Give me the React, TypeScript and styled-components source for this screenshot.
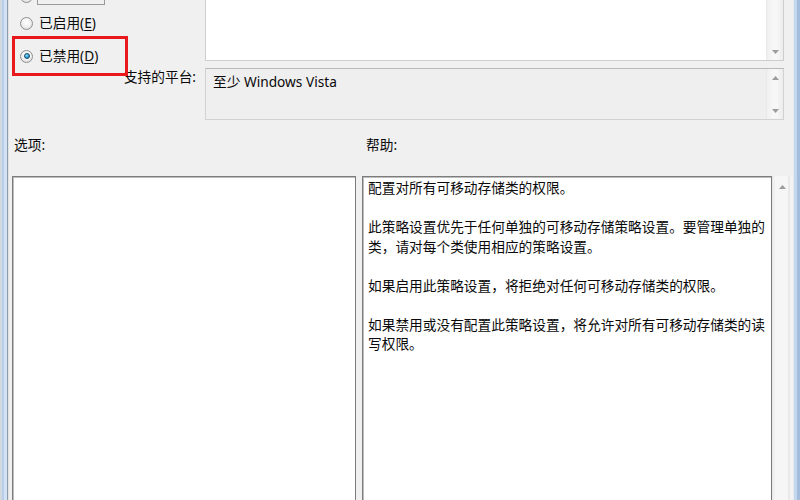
import styled, { createGlobalStyle } from "styled-components";

const GlobalStyle = createGlobalStyle`
  html, body {
    margin: 0;
    padding: 0;
  }
  body {
    width: 800px;
    height: 500px;
    overflow: hidden;
    background: #f0f0f0;
    font-family: "Noto Sans", "Noto Sans CJK SC", sans-serif;
    font-size: 13.7px;
    color: #0a0a0a;
  }
`;

const Window = styled.div`
  position: relative;
  display: flex;
  width: 800px;
  height: 500px;
  overflow: hidden;
  background: #f0f0f0;
`;

const FrameEdge = styled.div<{ $side: "left" | "right" }>`
  flex: none;
  width: ${(p) => (p.$side === "left" ? 9 : 7)}px;
  background: ${(p) =>
    p.$side === "left"
      ? "linear-gradient(to right, #d3d8de 0 2px, #b7cfec 2px 4px, #d2e2f4 4px 7px, #8f9cab 7px 8px, #dfe2e5 8px 9px)"
      : "linear-gradient(to right, #e8ebee 0 1px, #c3d7ee 1px 4px, #a3bddc 4px 7px)"};
`;

const Content = styled.div`
  flex: 1;
  display: flex;
  flex-direction: column;
  margin-top: -20px;
  min-width: 0;
`;

const TopSection = styled.div`
  display: grid;
  grid-template-columns: 196px 579px;
`;

const ChoiceColumn = styled.div`
  display: flex;
  flex-direction: column;
  padding: 3px 9px 0 11px;
`;

const RadioRow = styled.div<{ $after?: number; $bottom?: boolean }>`
  display: flex;
  align-items: ${(p) => (p.$bottom ? "flex-end" : "center")};
  gap: 4px;
  height: ${(p) => (p.$bottom ? 22 : 20)}px;
  margin-bottom: ${(p) => p.$after ?? 0}px;
  line-height: 18px;
`;

const RadioDot = styled.span<{ $checked?: boolean; $lift?: number }>`
  position: relative;
  flex: none;
  width: 13px;
  height: 13px;
  margin-bottom: ${(p) => p.$lift ?? 0}px;
  box-sizing: border-box;
  border-radius: 50%;
  border: 1px solid #8f8f8f;
  background: radial-gradient(circle at 50% 40%, #ffffff 0%, #f2f2f2 45%, #d4d4d4 100%);

  &::after {
    content: "";
    display: ${(p) => (p.$checked ? "block" : "none")};
    position: absolute;
    left: 2.5px;
    top: 2.5px;
    width: 6px;
    height: 6px;
    box-sizing: border-box;
    border-radius: 50%;
    border: 1px solid #1b4f6e;
    background: radial-gradient(circle at 40% 35%, #9be3fb 0%, #2ba6d9 50%, #0f5a82 100%);
  }
`;

/* focus rectangle of the first (scrolled-off) choice: only its lower edge shows */
const FocusFrame = styled.span`
  width: 68px;
  height: 22px;
  box-sizing: border-box;
  border: 1px solid #9a9a9a;
`;

const ChoiceLabel = styled.span`
  padding: 0 1px;
  border: 1px solid transparent;
  white-space: nowrap;

  u {
    text-decoration: underline;
    text-underline-offset: 2px;
  }
`;

const PlatformLabel = styled.div`
  margin-top: 3px;
  text-align: right;
  line-height: 16px;
  white-space: nowrap;
`;

const FieldColumn = styled.div`
  display: flex;
  flex-direction: column;
  gap: 7px;
`;

const TextBox = styled.div<{ $height: number; $readOnly?: boolean }>`
  display: flex;
  height: ${(p) => p.$height}px;
  box-sizing: border-box;
  border: 1px solid ${(p) => (p.$readOnly ? "#d2d2d2" : "#cdcdcd")};
  border-top-color: ${(p) => (p.$readOnly ? "#b8b8b8" : "#cdcdcd")};
  background: ${(p) => (p.$readOnly ? "#efefef" : "#ffffff")};
`;

const BoxText = styled.div`
  flex: 1;
  padding: 5px 7px 0;
  line-height: 16px;
`;

const ScrollBar = styled.div<{ $align: "start" | "end" | "both" }>`
  flex: none;
  width: 16px;
  display: flex;
  flex-direction: column;
  justify-content: ${(p) =>
    p.$align === "both" ? "space-between" : p.$align === "end" ? "flex-end" : "flex-start"};
  border-left: 1px solid #e9e9e9;
  background: linear-gradient(to right, #f0f0f0, #f7f7f7 40%, #f7f7f7 60%, #ececec);
`;

const ScrollButton = styled.div`
  height: 17px;
  display: flex;
  align-items: center;
  justify-content: center;
`;

const BottomSection = styled.div`
  flex: 1;
  display: grid;
  grid-template-columns: 350px 410px 21px;
  grid-template-rows: 16px 1fr;
  row-gap: 23px;
  margin-top: 17px;
  padding-left: 3px;
`;

const SectionLabel = styled.div<{ $indent: number }>`
  padding-left: ${(p) => p.$indent}px;
  line-height: 16px;
`;

const SunkenBox = styled.div<{ $gapRight?: number }>`
  height: 420px;
  box-sizing: border-box;
  margin-right: ${(p) => p.$gapRight ?? 0}px;
  border: 1px solid #7c7c7c;
  box-shadow: inset 1px 1px 0 #bdbdbd;
  background: #ffffff;
`;

const HelpBox = styled(SunkenBox)`
  padding: 1px 4px 0 5px;
  line-height: 19.5px;
`;

const HelpParagraph = styled.p`
  margin: 0 0 19.5px;
`;

const HelpScroll = styled.div`
  display: flex;
  flex-direction: column;
  padding-top: 2px;
  background: linear-gradient(to right, #e6e6e6 0 1px, #f1f1f1 1px 3px, #f6f6f6 3px 16px, #e9e9e9 16px 18px, #f3f3f3 18px);
`;

const Annotation = styled.div`
  position: absolute;
  left: 12px;
  top: 36px;
  width: 116px;
  height: 40px;
  box-sizing: border-box;
  border: 3px solid #e8181c;
  pointer-events: none;
`;

const Arrow = ({ up }: { up?: boolean }) => (
  <svg width="7" height="4" viewBox="0 0 7 4">
    <path d={up ? "M0 4 L3.5 0 L7 4 Z" : "M0 0 L7 0 L3.5 4 Z"} fill="#9c9c9c" />
  </svg>
);

const App = () => {
  return (
    <>
      <GlobalStyle />
      <Window>
        <FrameEdge $side="left" />
        <Content>
          <TopSection>
            <ChoiceColumn>
              <RadioRow $bottom $after={8}>
                <RadioDot $lift={2} />
                <FocusFrame />
              </RadioRow>
              <RadioRow $after={13}>
                <RadioDot />
                <ChoiceLabel>
                  已启用(<u>E</u>)
                </ChoiceLabel>
              </RadioRow>
              <RadioRow>
                <RadioDot $checked />
                <ChoiceLabel>
                  已禁用(<u>D</u>)
                </ChoiceLabel>
              </RadioRow>
              <PlatformLabel>支持的平台:</PlatformLabel>
            </ChoiceColumn>
            <FieldColumn>
              <TextBox $height={81}>
                <BoxText />
                <ScrollBar $align="end">
                  <ScrollButton>
                    <Arrow />
                  </ScrollButton>
                </ScrollBar>
              </TextBox>
              <TextBox $height={52} $readOnly>
                <BoxText>至少 Windows Vista</BoxText>
                <ScrollBar $align="both">
                  <ScrollButton>
                    <Arrow up />
                  </ScrollButton>
                  <ScrollButton>
                    <Arrow />
                  </ScrollButton>
                </ScrollBar>
              </TextBox>
            </FieldColumn>
          </TopSection>

          <BottomSection>
            <SectionLabel $indent={2}>选项:</SectionLabel>
            <SectionLabel $indent={4}>帮助:</SectionLabel>
            <div />
            <SunkenBox $gapRight={6} />
            <HelpBox>
              <HelpParagraph>配置对所有可移动存储类的权限。</HelpParagraph>
              <HelpParagraph>
                此策略设置优先于任何单独的可移动存储策略设置。要管理单独的类，请对每个类使用相应的策略设置。
              </HelpParagraph>
              <HelpParagraph>如果启用此策略设置，将拒绝对任何可移动存储类的权限。</HelpParagraph>
              <HelpParagraph>
                如果禁用或没有配置此策略设置，将允许对所有可移动存储类的读写权限。
              </HelpParagraph>
            </HelpBox>
            <HelpScroll>
              <ScrollButton>
                <Arrow up />
              </ScrollButton>
            </HelpScroll>
          </BottomSection>
        </Content>
        <FrameEdge $side="right" />
      </Window>
      <Annotation />
    </>
  );
};

export default App;
